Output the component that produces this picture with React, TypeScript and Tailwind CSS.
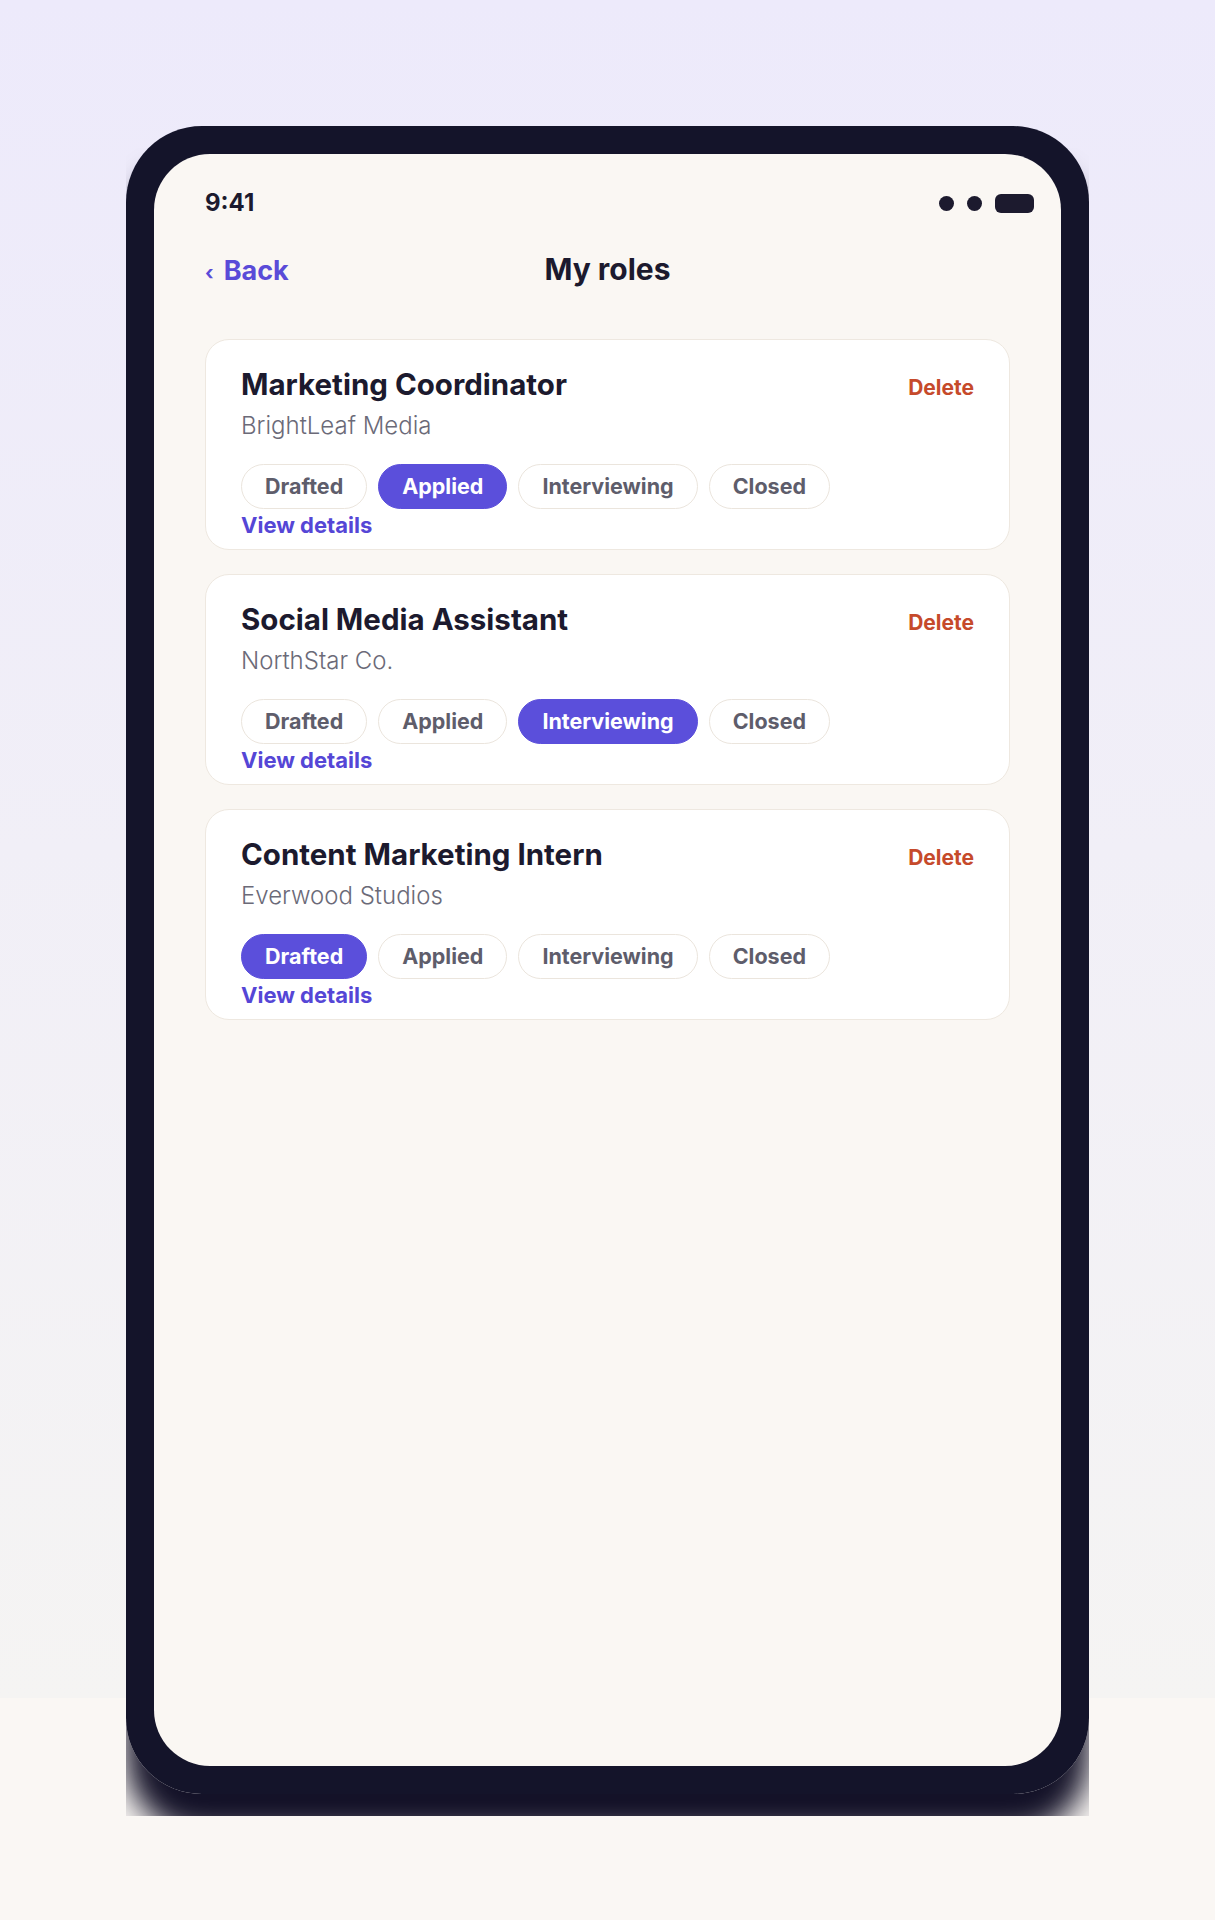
import React from "react";

type Stage = "Drafted" | "Applied" | "Interviewing" | "Closed";

type Role = {
    id: number;
    title: string;
    company: string;
    stage: Stage;
};

const stages: Stage[] = ["Drafted", "Applied", "Interviewing", "Closed"];

const roles: Role[] = [
    { id: 1, title: "Marketing Coordinator", company: "BrightLeaf Media", stage: "Applied" },
    { id: 2, title: "Social Media Assistant", company: "NorthStar Co.", stage: "Interviewing" },
    { id: 3, title: "Content Marketing Intern", company: "Everwood Studios", stage: "Drafted" },
];

export default function App() {
    return (
        <main
            className="flex min-h-screen w-full justify-center bg-[#faf7f4] bg-[linear-gradient(180deg,#edeafb_0px,#f5f4f3_1698px,#faf7f4_1698px)] py-[126px]"
            style={{ fontFamily: "Inter, 'Noto Sans', sans-serif" }}
        >
            <div className="relative h-[1668px] w-[963px]">
                {/* drop shadow, clipped like the original capture */}
                <div aria-hidden className="pointer-events-none absolute inset-x-0 top-[22px] h-[1668px] overflow-hidden">
                    <div className="h-full -translate-y-[22px] rounded-[76px] shadow-[0_40px_30px_rgba(20,18,40,1)]" />
                </div>

                <div className="relative h-full rounded-[76px] bg-[#14142a] p-[28px]">
                    <div className="h-full rounded-[56px] bg-[#faf7f3] px-[51px] pt-[34px]">
                        {/* Status bar */}
                        <div className="-mr-[24px] flex h-[30px] items-center justify-between">
                            <span className="text-[24px] leading-[30px] font-bold text-[#1c1a2e]">9:41</span>
                            <div className="flex items-center gap-[13px]">
                                <span className="h-[15px] w-[15px] rounded-full bg-[#1c1a2e]" />
                                <span className="h-[15px] w-[15px] rounded-full bg-[#1c1a2e]" />
                                <span className="h-[19px] w-[39px] rounded-[6px] bg-[#1c1a2e]" />
                            </div>
                        </div>

                        {/* Header */}
                        <div className="mt-[33px] grid grid-cols-[1fr_auto_1fr] items-baseline">
                            <button className="flex items-baseline gap-[10px] justify-self-start text-[#5a4bd8]">
                                <span className="text-[20px] leading-[36px] font-bold">‹</span>
                                <span className="text-[27px] leading-[36px] font-bold">Back</span>
                            </button>
                            <h1 className="text-[30px] leading-[36px] font-bold text-[#1c1a2e]">My roles</h1>
                            <div />
                        </div>

                        {/* Role list */}
                        <div className="mt-[48px] flex flex-col gap-[24px]">
                            {roles.map((role) => (
                                <RoleCard key={role.id} role={role} />
                            ))}
                        </div>
                    </div>
                </div>
            </div>
        </main>
    );
}

function RoleCard({ role }: { role: Role }) {
    return (
        <div className="rounded-[24px] border border-[#eee8e0] bg-white px-[35px] pt-[27px] pb-[10px]">
            <div className="flex items-baseline justify-between">
                <h2 className="text-[29.5px] leading-[34px] font-bold text-[#1c1a2e]">{role.title}</h2>
                <button className="text-[21px] leading-[34px] font-bold text-[#c64a2b]">Delete</button>
            </div>
            <p className="mt-[6px] text-[24px] leading-[30px] font-light text-[#6b6a78]">{role.company}</p>

            <div className="mt-[23px] flex gap-[11px]">
                {stages.map((stage) =>
                    stage === role.stage ? (
                        <span
                            key={stage}
                            className="flex h-[45px] items-center rounded-full border border-[#5b4fdb] bg-[#5b4fdb] px-[23px] text-[21.5px] font-bold text-white"
                        >
                            {stage}
                        </span>
                    ) : (
                        <span
                            key={stage}
                            className="flex h-[45px] items-center rounded-full border border-[#ebe5dd] bg-white px-[23px] text-[21.5px] font-bold text-[#5e5d6b]"
                        >
                            {stage}
                        </span>
                    )
                )}
            </div>

            <a className="mt-[2px] block text-[22px] leading-[28px] font-bold text-[#5546d6]">View details</a>
        </div>
    );
}
